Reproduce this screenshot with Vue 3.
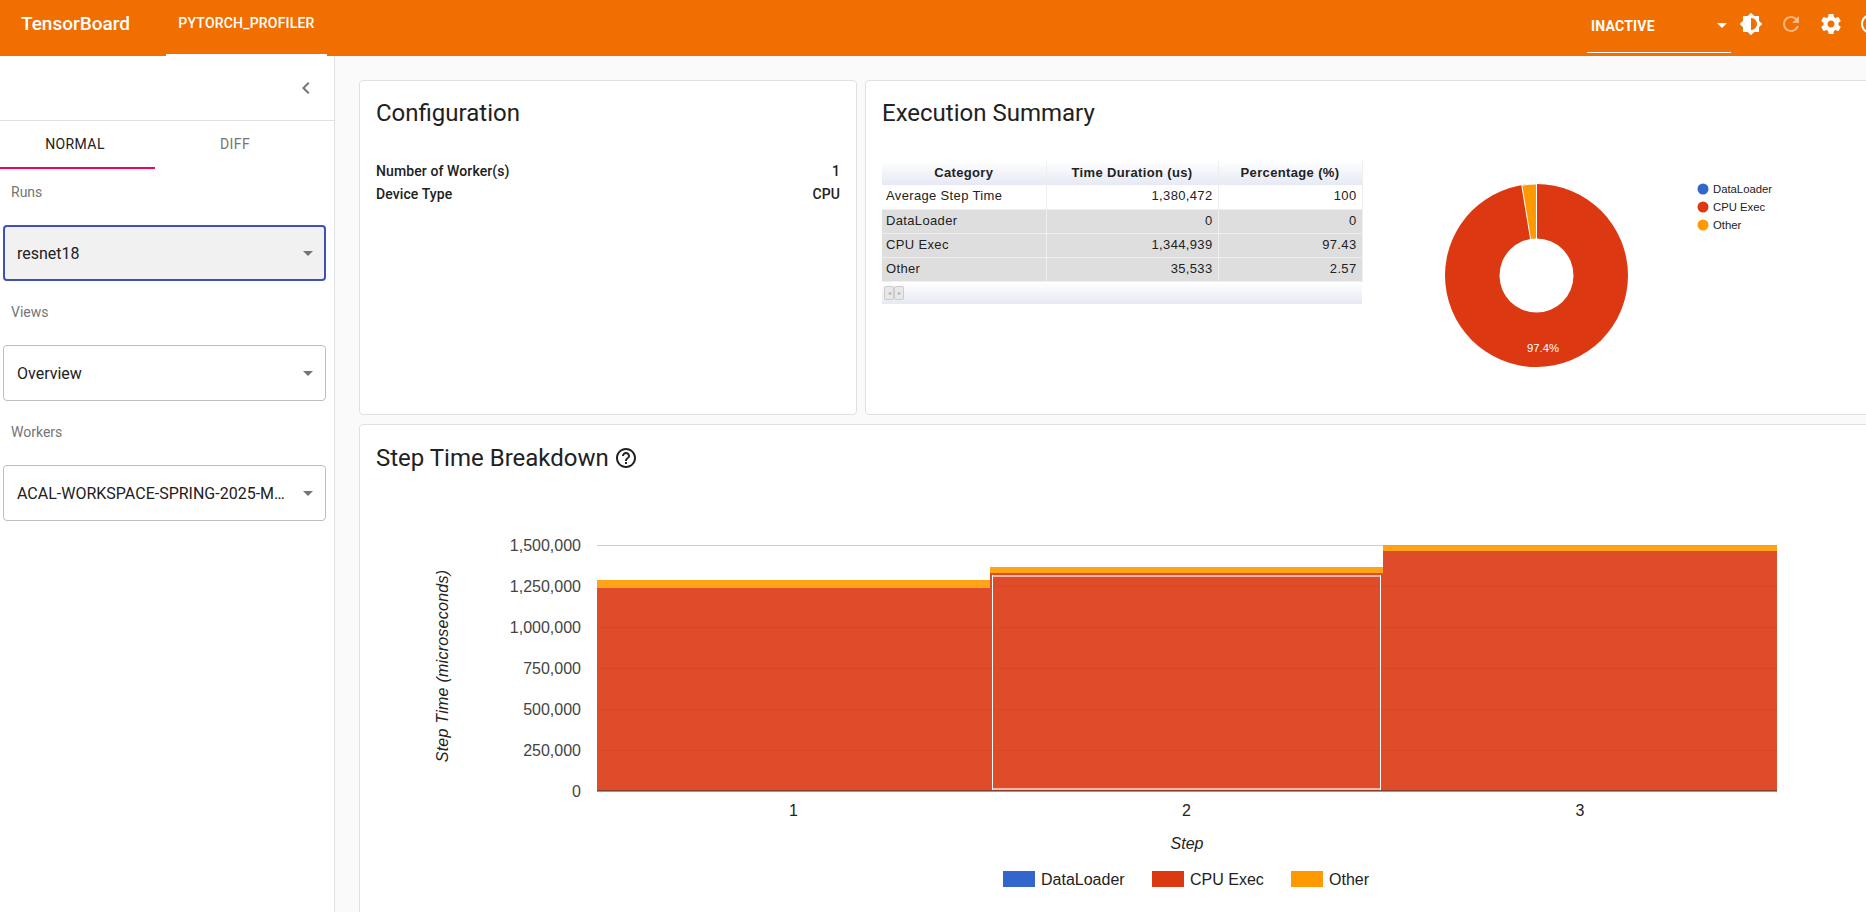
<template>
  <div class="app">
    <header class="topbar">
      <div class="brand">TensorBoard</div>
      <div class="plugin-tab">PYTORCH_PROFILER</div>
      <div class="spacer"></div>
      <div class="status-select">
        <span>INACTIVE</span>
        <i class="status-arrow"></i>
      </div>
      <div class="top-icons">
        <svg viewBox="0 0 24 24" class="top-icon"><path d="M20 15.31L23.31 12 20 8.69V4h-4.69L12 .69 8.69 4H4v4.69L.69 12 4 15.31V20h4.69L12 23.31 15.31 20H20v-4.69zM12 18V6c3.31 0 6 2.69 6 6s-2.69 6-6 6z" /></svg>
        <svg viewBox="0 0 24 24" class="top-icon dim"><path d="M17.65 6.35C16.2 4.9 14.21 4 12 4c-4.42 0-7.99 3.58-7.99 8s3.57 8 7.99 8c3.73 0 6.84-2.55 7.73-6h-2.08c-.82 2.33-3.04 4-5.65 4-3.31 0-6-2.69-6-6s2.69-6 6-6c1.66 0 3.14.69 4.22 1.78L13 11h7V4l-2.35 2.35z" /></svg>
        <svg viewBox="0 0 24 24" class="top-icon"><path d="M19.43 12.98c.04-.32.07-.64.07-.98s-.03-.66-.07-.98l2.11-1.65c.19-.15.24-.42.12-.64l-2-3.46c-.12-.22-.39-.3-.61-.22l-2.49 1c-.52-.4-1.08-.73-1.69-.98l-.38-2.65C14.46 2.18 14.25 2 14 2h-4c-.25 0-.46.18-.49.42l-.38 2.65c-.61.25-1.17.59-1.69.98l-2.49-1c-.23-.09-.49 0-.61.22l-2 3.46c-.13.22-.07.49.12.64l2.11 1.65c-.04.32-.07.65-.07.98s.03.66.07.98l-2.11 1.65c-.19.15-.24.42-.12.64l2 3.46c.12.22.39.3.61.22l2.49-1c.52.4 1.08.73 1.69.98l.38 2.65c.03.24.24.42.49.42h4c.25 0 .46-.18.49-.42l.38-2.65c.61-.25 1.17-.59 1.69-.98l2.49 1c.23.09.49 0 .61-.22l2-3.46c.12-.22.07-.49-.12-.64l-2.11-1.65zM12 15.5c-1.93 0-3.5-1.57-3.5-3.5s1.57-3.5 3.5-3.5 3.5 1.57 3.5 3.5-1.57 3.5-3.5 3.5z" /></svg>
        <svg viewBox="0 0 24 24" class="top-icon"><path :d="helpPath" /></svg>
      </div>
    </header>

    <div class="body">
      <aside class="sidebar">
        <div class="collapse-row">
          <svg viewBox="0 0 24 24" class="chevron"><path d="M15.41 7.41L14 6l-6 6 6 6 1.41-1.41L10.83 12z" /></svg>
        </div>
        <div class="mode-tabs">
          <div class="mode-tab active">NORMAL</div>
          <div class="mode-tab">DIFF</div>
        </div>
        <div v-for="field in fields" :key="field.label" class="field">
          <div class="field-label">{{ field.label }}</div>
          <div class="select" :class="{ focused: field.focused }">
            <span class="select-value">{{ field.value }}</span>
            <i class="select-arrow"></i>
          </div>
        </div>
      </aside>

      <main class="content">
        <section class="card config-card">
          <h2 class="card-title">Configuration</h2>
          <div class="config-rows">
            <div class="config-row"><span>Number of Worker(s)</span><span>1</span></div>
            <div class="config-row"><span>Device Type</span><span>CPU</span></div>
          </div>
        </section>

        <section class="card summary-card">
          <h2 class="card-title">Execution Summary</h2>
          <div class="summary-body">
            <div class="table-wrap">
              <table class="summary-table">
                <colgroup>
                  <col style="width: 164px" />
                  <col style="width: 172px" />
                  <col style="width: 144px" />
                </colgroup>
                <thead>
                  <tr>
                    <th>Category</th>
                    <th>Time Duration (us)</th>
                    <th>Percentage (%)</th>
                  </tr>
                </thead>
                <tbody>
                  <tr v-for="(row, i) in summaryRows" :key="row[0]" :class="{ shaded: i > 0 }">
                    <td>{{ row[0] }}</td>
                    <td class="num">{{ row[1] }}</td>
                    <td class="num">{{ row[2] }}</td>
                  </tr>
                </tbody>
              </table>
              <div class="table-footer">
                <span class="pager">
                  <i class="pager-btn">◂</i><i class="pager-btn">▸</i>
                </span>
              </div>
            </div>
            <svg class="donut" viewBox="1362 161 500 220" width="500" height="220">
              <circle cx="1536.5" cy="275.5" r="91.5" fill="#dc3912" />
              <path :d="otherSlice" fill="#ff9900" stroke="#fff" stroke-width="1" />
              <circle cx="1536.5" cy="275.5" r="37" fill="#fff" />
              <text x="1543" y="352" class="donut-label" text-anchor="middle">97.4%</text>
              <g v-for="item in pieLegend" :key="item.name">
                <circle cx="1703" :cy="item.y" r="5.5" :fill="item.color" />
                <text x="1713" :y="item.y + 4" class="pie-legend">{{ item.name }}</text>
              </g>
            </svg>
          </div>
        </section>

        <section class="card steps-card">
          <h2 class="card-title steps-title">
            Step Time Breakdown
            <svg viewBox="0 0 24 24" class="help"><path :d="helpPath" /></svg>
          </h2>
          <svg class="steps-chart" viewBox="360 489 1480 480" width="1480" height="480">
            <line v-for="y in gridLines" :key="y" x1="597" x2="1777" :y1="y" :y2="y" stroke="#ccc" />
            <g v-for="bar in bars" :key="bar.label">
              <rect :x="bar.x" :y="bar.top" :width="bar.w" :height="bar.split - bar.top" fill="#ff9900" fill-opacity="0.9" />
              <rect :x="bar.x" :y="bar.split" :width="bar.w" :height="791 - bar.split" fill="#dc3912" fill-opacity="0.9" />
              <text :x="bar.x + bar.w / 2" y="816" class="x-tick" text-anchor="middle">{{ bar.label }}</text>
            </g>
            <line x1="992.5" x2="992.5" y1="575" y2="790" stroke="#fff" />
            <line x1="1380.5" x2="1380.5" y1="575" y2="790" stroke="#fff" />
            <rect x="993" y="575" width="387" height="2" fill="#fff" fill-opacity="0.6" />
            <rect x="993" y="788" width="387" height="2" fill="#fff" fill-opacity="0.6" />
            <line x1="597" x2="1777" y1="791" y2="791" stroke="#333" />
            <text v-for="t in yTicks" :key="t.label" x="581" :y="t.y + 6" class="y-tick" text-anchor="end">{{ t.label }}</text>
            <text class="axis-title y-title" transform="translate(448 666) rotate(-90)" text-anchor="middle">Step Time (microseconds)</text>
            <text class="axis-title" x="1187" y="849" text-anchor="middle">Step</text>
            <g v-for="item in stepLegend" :key="item.name">
              <rect :x="item.x" y="871" width="32" height="16" :fill="item.color" />
              <text :x="item.x + 38" y="885" class="legend-text">{{ item.name }}</text>
            </g>
          </svg>
        </section>
      </main>
    </div>
  </div>
</template>

<script setup>
const helpPath =
  'M11 18h2v-2h-2v2zm1-16C6.48 2 2 6.48 2 12s4.48 10 10 10 10-4.48 10-10S17.52 2 12 2zm0 18c-4.41 0-8-3.59-8-8s3.59-8 8-8 8 3.59 8 8-3.59 8-8 8zm0-14c-2.21 0-4 1.79-4 4h2c0-1.1.9-2 2-2s2 .9 2 2c0 2-3 1.75-3 5h2c0-2.25 3-2.5 3-5 0-2.21-1.79-4-4-4z'

const fields = [
  { label: 'Runs', value: 'resnet18', focused: true },
  { label: 'Views', value: 'Overview' },
  { label: 'Workers', value: 'ACAL-WORKSPACE-SPRING-2025-M…' },
]

const summaryRows = [
  ['Average Step Time', '1,380,472', '100'],
  ['DataLoader', '0', '0'],
  ['CPU Exec', '1,344,939', '97.43'],
  ['Other', '35,533', '2.57'],
]

// 2.57% wedge that ends at twelve o'clock
const angle = (2.57 / 100) * 2 * Math.PI
const otherSlice = `M1536.5 275.5 L${1536.5 - 91.5 * Math.sin(angle)} ${275.5 - 91.5 * Math.cos(angle)} A91.5 91.5 0 0 1 1536.5 184 Z`

const pieLegend = [
  { name: 'DataLoader', color: '#3366cc', y: 189 },
  { name: 'CPU Exec', color: '#dc3912', y: 207 },
  { name: 'Other', color: '#ff9900', y: 225 },
]

const gridLines = [545.5, 586.5, 627.5, 668.5, 709.5, 750.5]

const yTicks = [
  { label: '1,500,000', y: 545 },
  { label: '1,250,000', y: 586 },
  { label: '1,000,000', y: 627 },
  { label: '750,000', y: 668 },
  { label: '500,000', y: 709 },
  { label: '250,000', y: 750 },
  { label: '0', y: 791 },
]

const bars = [
  { label: '1', x: 597, w: 393, top: 580, split: 588 },
  { label: '2', x: 990, w: 393, top: 567, split: 573 },
  { label: '3', x: 1383, w: 394, top: 545, split: 551 },
]

const stepLegend = [
  { name: 'DataLoader', color: '#3366cc', x: 1003 },
  { name: 'CPU Exec', color: '#dc3912', x: 1152 },
  { name: 'Other', color: '#ff9900', x: 1291 },
]
</script>

<style>
html,
body {
  height: 100%;
  overflow: hidden;
}
</style>

<style scoped>
.app {
  width: 1866px;
  height: 912px;
  display: flex;
  flex-direction: column;
  font-family: Roboto, Arial, sans-serif;
  color: #212121;
  overflow: hidden;
}

.topbar {
  height: 56px;
  flex-shrink: 0;
  display: flex;
  background: #f16e00;
  color: #fff;
  padding-left: 21px;
}

.brand {
  font-size: 19px;
  font-weight: 500;
  line-height: 48px;
  width: 145px;
}

.plugin-tab {
  width: 161px;
  height: 56px;
  box-sizing: border-box;
  border-bottom: 2px solid #fff;
  font-size: 14px;
  font-weight: 500;
  letter-spacing: 0.2px;
  line-height: 47px;
  text-align: center;
}

.spacer {
  flex: 1;
}

.status-select {
  width: 144px;
  height: 53px;
  box-sizing: border-box;
  border-bottom: 1px solid #fff;
  padding: 0 4px;
  display: flex;
  justify-content: space-between;
  align-items: center;
  font-size: 14px;
  font-weight: 700;
  letter-spacing: 0.2px;
  position: relative;
}

.status-arrow {
  position: absolute;
  left: 130px;
  top: 23px;
  border-left: 5px solid transparent;
  border-right: 5px solid transparent;
  border-top: 5px solid #fff;
}

.top-icons {
  width: 135px;
  flex-shrink: 0;
  display: flex;
  gap: 16px;
  padding: 12px 0 0 8px;
  box-sizing: border-box;
}

.top-icon {
  width: 24px;
  height: 24px;
  flex-shrink: 0;
  fill: #fff;
}

.top-icon.dim {
  opacity: 0.5;
}

.body {
  flex: 1;
  display: flex;
  min-height: 0;
  background: #fafafa;
}

.sidebar {
  width: 334px;
  flex-shrink: 0;
  background: #fff;
  border-right: 1px solid #e0e0e0;
}

.collapse-row {
  height: 64px;
  border-bottom: 1px solid #e0e0e0;
  display: flex;
  justify-content: flex-end;
  align-items: center;
  padding-right: 16px;
}

.chevron {
  width: 24px;
  height: 24px;
  fill: #757575;
}

.mode-tabs {
  display: flex;
  height: 48px;
}

.mode-tab {
  width: 155px;
  padding-right: 5px;
  margin-right: 5px;
  box-sizing: border-box;
  font-size: 14px;
  letter-spacing: 0.4px;
  line-height: 46px;
  text-align: center;
  color: #757575;
}

.mode-tab.active {
  color: #212121;
  border-bottom: 2px solid #f50057;
  height: 48px;
}

.field {
  padding: 0 8px 0 3px;
}

.field + .field {
  margin-top: 8px;
}

.field-label {
  height: 56px;
  padding: 15px 0 0 8px;
  box-sizing: border-box;
  font-size: 14px;
  color: #757575;
}

.select {
  height: 56px;
  box-sizing: border-box;
  border: 1px solid #bdbdbd;
  border-radius: 4px;
  padding: 0 12px 0 13px;
  display: flex;
  align-items: center;
  gap: 10px;
  font-size: 16px;
}

.select.focused {
  border: 2px solid #3f51b5;
  background: #f1f1f1;
  padding: 0 11px 0 12px;
}

.select-value {
  flex: 1;
  min-width: 0;
  white-space: nowrap;
}

.select-arrow {
  border-left: 5px solid transparent;
  border-right: 5px solid transparent;
  border-top: 5px solid #757575;
  flex-shrink: 0;
}

.content {
  flex: 1;
  min-width: 0;
  overflow: hidden;
  padding: 24px 0 0 24px;
  display: grid;
  grid-template-columns: 498px 1100px;
  grid-template-rows: 335px 600px;
  gap: 9px 8px;
}

.card {
  background: #fff;
  border: 1px solid #e0e0e0;
  border-radius: 4px;
  box-sizing: border-box;
}

.card-title {
  margin: 0;
  font-size: 24px;
  font-weight: 400;
  line-height: 32px;
  padding: 16px 16px 0;
}

.config-rows {
  padding: 31px 16px 0;
}

.config-row {
  display: flex;
  justify-content: space-between;
  font-size: 14px;
  font-weight: 500;
  letter-spacing: 0.1px;
  line-height: 22.5px;
}

.summary-body {
  display: flex;
  align-items: flex-start;
  padding: 32px 0 0 16px;
}

.table-wrap {
  width: 480px;
  flex-shrink: 0;
}

.summary-table {
  width: 480px;
  table-layout: fixed;
  border-collapse: collapse;
  font-family: 'Liberation Sans', Arial, sans-serif;
  font-size: 13px;
  letter-spacing: 0.35px;
  color: #222;
}

.summary-table th {
  height: 24px;
  padding: 0 0 2px;
  box-sizing: border-box;
  font-weight: 700;
  background: linear-gradient(#fff, #e6e9f4);
  border-right: 1px solid #eee;
}

.summary-table td {
  height: 24px;
  padding: 0 5px 2px 4px;
  box-sizing: border-box;
  border-right: 1px solid #eee;
  border-bottom: 1px solid #eee;
}

.summary-table .shaded td {
  background: #dedede;
}

.summary-table .num {
  text-align: right;
}

.table-footer {
  height: 22px;
  background: linear-gradient(#fff, #e6e9f4);
  display: flex;
  align-items: center;
  padding-left: 2px;
}

.pager {
  display: flex;
}

.pager-btn {
  width: 10px;
  height: 14px;
  border: 1px solid #ccc;
  box-sizing: border-box;
  border-radius: 2px;
  background: #e8e8e8;
  color: #aaa;
  font-size: 6px;
  font-style: normal;
  line-height: 12px;
  text-align: center;
}

.donut {
  display: block;
  flex-shrink: 0;
}

.donut-label {
  font-family: 'Liberation Sans', Arial, sans-serif;
  font-size: 11.3px;
  fill: #fff;
}

.pie-legend {
  font-family: 'Liberation Sans', Arial, sans-serif;
  font-size: 11.3px;
  fill: #222;
}

.steps-card {
  grid-column: 1 / 3;
}

.steps-title {
  height: 64px;
  box-sizing: border-box;
  display: flex;
  align-items: flex-start;
  gap: 5px;
  padding-top: 17px;
}

.help {
  width: 24px;
  height: 24px;
  margin-top: 4px;
  fill: #212121;
}

.steps-chart {
  display: block;
}

.y-tick,
.x-tick,
.legend-text {
  font-family: 'Liberation Sans', Arial, sans-serif;
  font-size: 16px;
}

.y-tick {
  fill: #444;
}

.x-tick,
.legend-text {
  fill: #222;
}

.axis-title {
  font-family: 'Liberation Sans', Arial, sans-serif;
  font-size: 16px;
  font-style: italic;
  fill: #222;
}

.y-title {
  letter-spacing: 0.25px;
}
</style>
